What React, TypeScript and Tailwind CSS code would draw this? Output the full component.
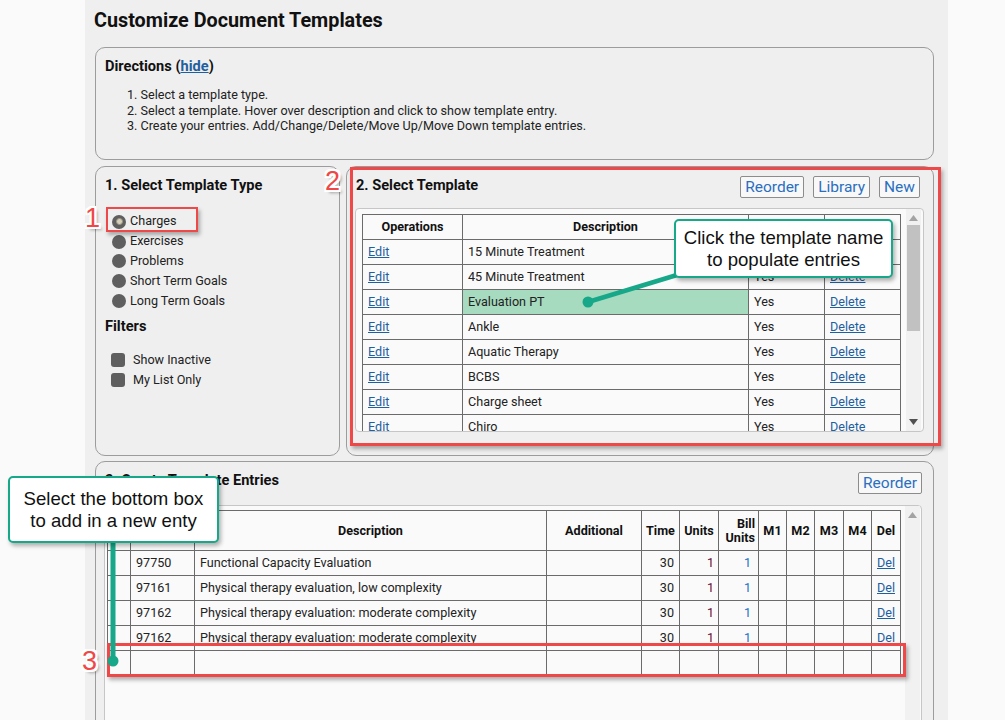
import React from "react";

const templates = [
  "15 Minute Treatment",
  "45 Minute Treatment",
  "Evaluation PT",
  "Ankle",
  "Aquatic Therapy",
  "BCBS",
  "Charge sheet",
  "Chiro",
];

const entries = [
  ["97750", "Functional Capacity Evaluation"],
  ["97161", "Physical therapy evaluation, low complexity"],
  ["97162", "Physical therapy evaluation: moderate complexity"],
  ["97162", "Physical therapy evaluation: moderate complexity"],
];

const templateTypes = ["Charges", "Exercises", "Problems", "Short Term Goals", "Long Term Goals"];

const cell = "border border-[#6b6b6b] h-[25px] px-[5px] text-[12.6px] leading-none text-[#222] whitespace-nowrap overflow-hidden";
const headCell = "border border-[#6b6b6b] px-[3px] text-[12.6px] leading-[14px] font-bold text-[#111] text-center";
const link = "text-[#1f5f9f] underline";
const heading = "text-[14.6px] leading-[20px] font-bold text-[#111]";
const btn =
  "h-[22px] border border-[#8c8c8c] rounded-[2px] bg-[#f8f8f8] text-[#2a6fc0] text-[15.5px] leading-[20px] px-[4px]";
const outline =
  "[text-shadow:-2px_-2px_0_#fff,2px_-2px_0_#fff,-2px_2px_0_#fff,2px_2px_0_#fff,0_2px_0_#fff,0_-2px_0_#fff,2px_0_0_#fff,-2px_0_0_#fff,3px_3px_3px_rgba(0,0,0,0.35)]";
const callout =
  "absolute bg-white border-[2.5px] border-[#17a88a] rounded-[5px] shadow-[2px_3px_4px_rgba(0,0,0,0.3)] flex flex-col items-center justify-center font-['Liberation_Sans',Arial,sans-serif] text-[18.6px] leading-[22px] text-[#111]";
const redBox = "absolute border-[#ef4848] shadow-[2px_3px_4px_rgba(0,0,0,0.3)]";
const num = `absolute text-[27px] leading-[30px] text-[#f04747] font-['Liberation_Sans',Arial,sans-serif] ${outline}`;

const ScrollBar = ({ thumb }: { thumb: boolean }) => (
  <div className="w-[15px] bg-[#f1f1f1] flex flex-col items-center">
    <svg width="9" height="6" viewBox="0 0 9 6" className="mt-[6px]">
      <path d="M0 6 L4.5 0 L9 6 Z" fill="#a3a3a3" />
    </svg>
    {thumb && <div className="mt-[4px] w-[13px] h-[106px] bg-[#c1c1c1]" />}
    <div className="flex-1" />
    {thumb && (
      <svg width="9" height="6" viewBox="0 0 9 6" className="mb-[6px]">
        <path d="M0 0 L9 0 L4.5 6 Z" fill="#505050" />
      </svg>
    )}
  </div>
);

export default function App() {
  return (
    <div className="relative w-[1005px] h-[720px] overflow-hidden bg-[#fafafa] font-[Roboto,sans-serif]">
      <div className="ml-[85px] w-[863px] h-[720px] bg-[#efefef] pl-[10px] pr-[14px] pt-[9px]">
        <h1 className="-ml-px text-[19.8px] leading-[24px] font-bold text-[#111]">Customize Document Templates</h1>

        {/* Directions */}
        <div className="mt-[14px] h-[113px] border border-[#9c9c9c] rounded-[10px] px-[9px] pt-[8px]">
          <div className={heading}>
            Directions (<span className={link}>hide</span>)
          </div>
          <ol className="mt-[11px] pl-[22px] text-[12.6px] leading-[15.5px] text-[#222]">
            <li>1. Select a template type.</li>
            <li>2. Select a template. Hover over description and click to show template entry.</li>
            <li>3. Create your entries. Add/Change/Delete/Move Up/Move Down template entries.</li>
          </ol>
        </div>

        <div className="mt-[6px] flex gap-[6px] h-[290px]">
          {/* Panel 1 */}
          <div className="w-[245px] border border-[#9c9c9c] rounded-[10px] px-[9px] pt-[8px]">
            <div className={heading}>1. Select Template Type</div>
            <div className="mt-[17px]">
              {templateTypes.map((t, i) => (
                <div key={t} className="h-[19.8px] flex items-center pl-[7px]">
                  <span className="w-[14px] h-[14px] rounded-full bg-[#5f5f5f] flex items-center justify-center">
                    {i === 0 && <span className="w-[7px] h-[7px] rounded-full bg-[#d6d0bb] border border-[#9a9480]" />}
                  </span>
                  <span className="ml-[4px] text-[12.6px] text-[#222]">{t}</span>
                </div>
              ))}
            </div>
            <div className={`mt-[5px] ${heading}`}>Filters</div>
            <div className="mt-[14px]">
              {["Show Inactive", "My List Only"].map((t) => (
                <div key={t} className="h-[20px] flex items-center pl-[6px]">
                  <span className="w-[14px] h-[14px] rounded-[3px] bg-[#5f5f5f]" />
                  <span className="ml-[8px] text-[12.6px] text-[#222]">{t}</span>
                </div>
              ))}
            </div>
          </div>

          {/* Panel 2 */}
          <div className="flex-1 border border-[#9c9c9c] rounded-[10px] pl-[8px] pr-[9px] pt-[9px]">
            <div className="h-[22px] flex items-center justify-between">
              <div className={`-mt-[4px] ml-px ${heading}`}>2. Select Template</div>
              <div className="flex gap-[9px] mr-[4px]">
                <button className={btn}>Reorder</button>
                <button className={btn}>Library</button>
                <button className={btn}>New</button>
              </div>
            </div>
            <div className="mt-[10px] h-[224px] border border-[#c6c6c6] rounded-[4px] bg-[#fafafa] flex overflow-hidden">
              <div className="pl-[6px] pt-[5px] overflow-hidden">
                <table className="table-fixed border-collapse w-[538px]">
                  <colgroup>
                    <col className="w-[100px]" />
                    <col className="w-[286px]" />
                    <col className="w-[76px]" />
                    <col className="w-[76px]" />
                  </colgroup>
                  <thead>
                    <tr className="h-[25px]">
                      <th className={headCell}>Operations</th>
                      <th className={headCell}>Description</th>
                      <th className={headCell}>Active</th>
                      <th className={headCell}>Delete</th>
                    </tr>
                  </thead>
                  <tbody>
                    {templates.map((t, i) => (
                      <tr key={t}>
                        <td className={cell}>
                          <span className={link}>Edit</span>
                        </td>
                        <td className={`${cell} ${i === 2 ? "bg-[#a7dbbf]" : ""}`}>{t}</td>
                        <td className={cell}>Yes</td>
                        <td className={cell}>
                          <span className={link}>Delete</span>
                        </td>
                      </tr>
                    ))}
                  </tbody>
                </table>
              </div>
              <div className="ml-[5px] flex">
                <ScrollBar thumb />
              </div>
            </div>
          </div>
        </div>

        {/* Panel 3 */}
        <div className="mt-[5px] h-[290px] border border-[#9c9c9c] rounded-[10px] pl-[8px] pr-[11px] pt-[10px]">
          <div className="h-[22px] flex items-center justify-between">
            <div className={`-mt-[6px] ml-px ${heading}`}>3. Create Template Entries</div>
            <button className={btn}>Reorder</button>
          </div>
          <div className="mt-[11px] h-[240px] border border-[#c6c6c6] rounded-[4px] bg-[#fafafa] flex">
            <div className="pl-[2px] pt-[4px]">
              <table className="table-fixed border-collapse w-[793px]">
                <colgroup>
                  {[23, 64, 352, 95, 38, 39, 40, 28, 28, 29, 28, 29].map((w, i) => (
                    <col key={i} style={{ width: w }} />
                  ))}
                </colgroup>
                <thead>
                  <tr className="h-[40px]">
                    <th className={headCell}></th>
                    <th className={headCell}>Code</th>
                    <th className={headCell}>Description</th>
                    <th className={headCell}>Additional</th>
                    <th className={headCell}>Time</th>
                    <th className={headCell}>Units</th>
                    <th className={`${headCell} !text-right`}>
                      Bill
                      <br />
                      Units
                    </th>
                    <th className={headCell}>M1</th>
                    <th className={headCell}>M2</th>
                    <th className={headCell}>M3</th>
                    <th className={headCell}>M4</th>
                    <th className={headCell}>Del</th>
                  </tr>
                </thead>
                <tbody>
                  {entries.map(([code, desc], i) => (
                    <tr key={i}>
                      <td className={cell}></td>
                      <td className={cell}>{code}</td>
                      <td className={cell}>{desc}</td>
                      <td className={cell}></td>
                      <td className={`${cell} text-right`}>30</td>
                      <td className={`${cell} text-right !text-[#6a1034] pr-[4px]`}>1</td>
                      <td className={`${cell} text-right !text-[#1f73c4] pr-[7px]`}>1</td>
                      <td className={cell}></td>
                      <td className={cell}></td>
                      <td className={cell}></td>
                      <td className={cell}></td>
                      <td className={`${cell} text-center`}>
                        <span className={link}>Del</span>
                      </td>
                    </tr>
                  ))}
                  <tr>
                    <td className={`${cell} !text-[9px] !text-[#5a6fa0]`}>*</td>
                    {Array.from({ length: 11 }).map((_, i) => (
                      <td key={i} className={cell}></td>
                    ))}
                  </tr>
                </tbody>
              </table>
            </div>
            <div className="ml-[4px] flex">
              <ScrollBar thumb={false} />
            </div>
          </div>
        </div>
      </div>

      {/* Annotations */}
      <div className={`${redBox} left-[106px] top-[207px] w-[92px] h-[25px] border-[2.5px]`} />
      <div className={`${redBox} left-[350px] top-[167px] w-[591px] h-[279px] border-[3px]`} />
      <div className={`${redBox} left-[107px] top-[643px] w-[799px] h-[34px] border-[3px]`} />

      <svg className="absolute left-0 top-0 pointer-events-none" width="1005" height="720">
        <line x1="588" y1="302" x2="700" y2="268" stroke="#17a88a" strokeWidth="4.5" />
        <circle cx="588" cy="302" r="5.5" fill="#17a88a" />
        <line x1="113" y1="530" x2="113" y2="661" stroke="#17a88a" strokeWidth="5" />
        <circle cx="113" cy="661" r="5.5" fill="#17a88a" />
      </svg>

      <div className={`${callout} left-[674px] top-[219px] w-[219px] h-[59px]`}>
        <div>Click the template name</div>
        <div>to populate entries</div>
      </div>
      <div className={`${callout} left-[8px] top-[476px] w-[211px] h-[67px]`}>
        <div>Select the bottom box</div>
        <div>to add in a new enty</div>
      </div>

      <div className={`${num} left-[85px] top-[203px]`}>1</div>
      <div className={`${num} left-[325px] top-[166px]`}>2</div>
      <div className={`${num} left-[82px] top-[646px]`}>3</div>
    </div>
  );
}
